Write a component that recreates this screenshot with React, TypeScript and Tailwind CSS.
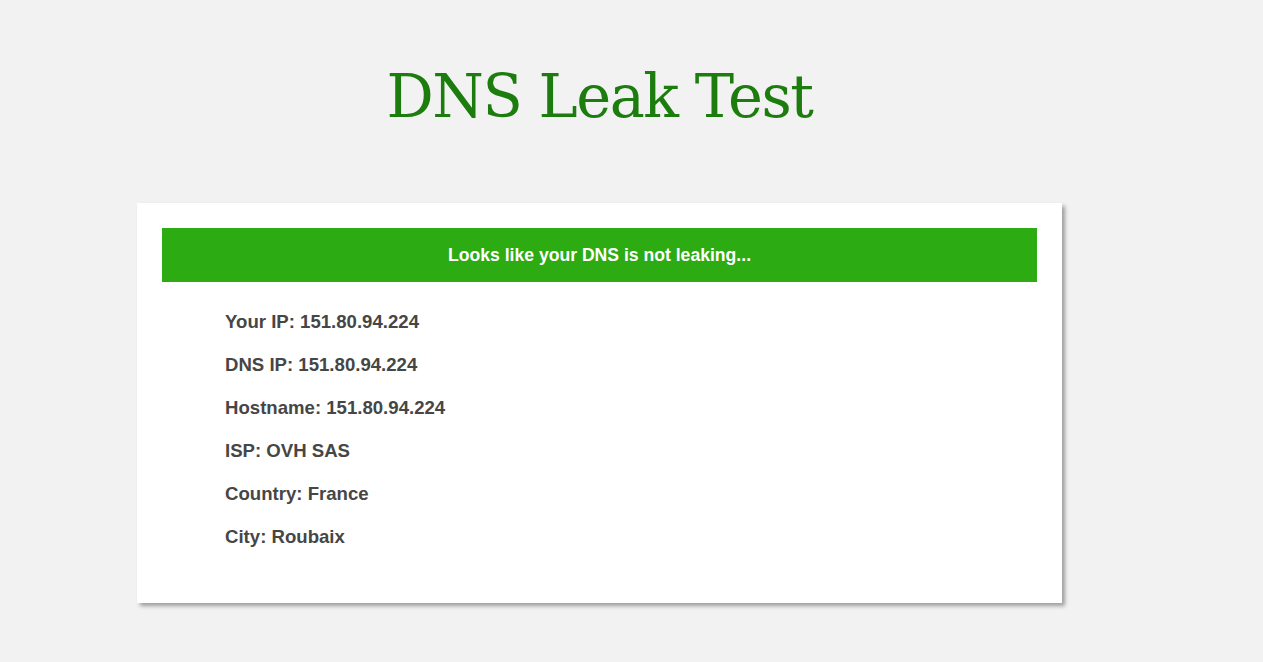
export default function App() {
  const rows = [
    "Your IP: 151.80.94.224",
    "DNS IP: 151.80.94.224",
    "Hostname: 151.80.94.224",
    "ISP: OVH SAS",
    "Country: France",
    "City: Roubaix",
  ];

  return (
    <div className="min-h-[662px] bg-[#f2f2f2] pt-[57px]">
      <div className="ml-[137px] w-[925px]">
        <h1 className="text-center text-[59px] leading-[80px] tracking-[-1.5px] text-[#1c7d0e] font-['DejaVu_Serif',serif] font-normal">
          DNS Leak Test
        </h1>

        <div className="mt-[66px] bg-white p-[25px] pb-[45px] shadow-[3px_3px_4px_rgba(0,0,0,0.35)]">
          <div className="flex h-[54px] items-center justify-center bg-[#2cab12] text-[17.6px] font-bold text-white font-['Liberation_Sans',Arial,sans-serif]">
            Looks like your DNS is not leaking...
          </div>

          <ul className="pl-[63px] pt-[18px] text-[18.6px] font-bold text-[#464646] font-['Liberation_Sans',Arial,sans-serif]">
            {rows.map((r) => (
              <li key={r} className="leading-[43px]">
                {r}
              </li>
            ))}
          </ul>
        </div>
      </div>
    </div>
  );
}
